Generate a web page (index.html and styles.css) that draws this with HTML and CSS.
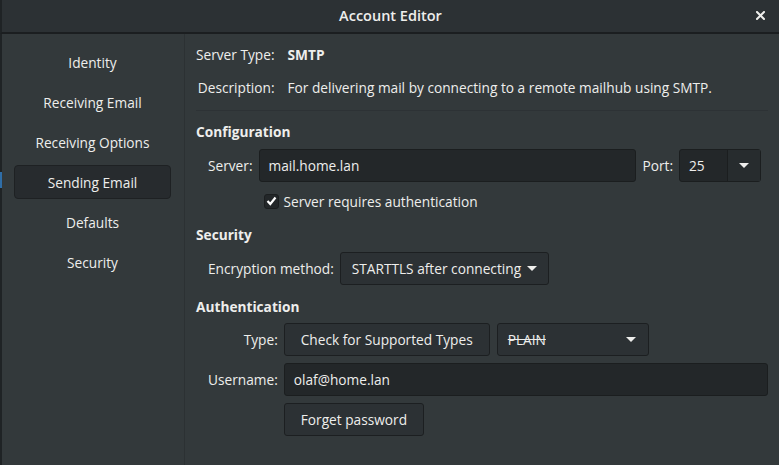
FILE: index.html
```html
<!DOCTYPE html>
<html lang="en">
<head>
    <meta charset="UTF-8">
    <meta name="viewport" content="width=device-width, initial-scale=1.0">
    <title>Account Editor</title>
    <link rel="stylesheet" href="styles.css">
</head>
<body>
    <div class="window">
        <header class="titlebar">
            <span></span>
            <span class="title">Account Editor</span>
            <button class="close" title="Close">
                <svg width="9" height="9" viewBox="0 0 9 9">
                    <path d="M1 1 L8 8 M8 1 L1 8" stroke="#eeeeec" stroke-width="2" stroke-linecap="square"/>
                </svg>
            </button>
        </header>

        <div class="main">
            <nav class="sidebar">
                <a class="nav-item">Identity</a>
                <a class="nav-item">Receiving Email</a>
                <a class="nav-item">Receiving Options</a>
                <a class="nav-item active">Sending Email</a>
                <a class="nav-item">Defaults</a>
                <a class="nav-item">Security</a>
            </nav>

            <main class="content">
                <div class="info-grid">
                    <span class="label">Server Type:</span>
                    <strong>SMTP</strong>
                    <span class="label">Description:</span>
                    <span>For delivering mail by connecting to a remote mailhub using SMTP.</span>
                </div>

                <hr class="sep">

                <!-- Configuration -->
                <h2 class="heading first">Configuration</h2>
                <div class="form-grid config">
                    <label class="label">Server:</label>
                    <div class="entry">mail.home.lan</div>
                    <label class="label">Port:</label>
                    <div class="spin-combo">
                        <span class="spin-value">25</span>
                        <span class="spin-button"><i class="arrow"></i></span>
                    </div>
                    <label class="check-row">
                        <span class="checkbox">
                            <svg width="11" height="10" viewBox="0 0 11 10">
                                <path d="M1.5 5 L4.3 8 L9.5 1.5" fill="none" stroke="#ffffff" stroke-width="2.2"/>
                            </svg>
                        </span>
                        Server requires authentication
                    </label>
                </div>

                <!-- Security -->
                <h2 class="heading security">Security</h2>
                <div class="form-grid">
                    <label class="label">Encryption method:</label>
                    <button class="btn combo">STARTTLS after connecting <i class="arrow"></i></button>
                </div>

                <!-- Authentication -->
                <h2 class="heading auth-title">Authentication</h2>
                <div class="form-grid auth">
                    <label class="label">Type:</label>
                    <div class="type-row">
                        <button class="btn">Check for Supported Types</button>
                        <button class="btn combo wide"><span class="struck">PLAIN</span><i class="arrow"></i></button>
                    </div>
                    <label class="label">Username:</label>
                    <div class="entry">olaf@home.lan</div>
                    <span></span>
                    <button class="btn forget">Forget password</button>
                </div>
            </main>
        </div>
    </div>
</body>
</html>
```

FILE: styles.css
```css
* {
    box-sizing: border-box;
}

body {
    margin: 0;
    width: 779px;
    height: 465px;
    overflow: hidden;
    font-family: 'Open Sans', 'Noto Sans', sans-serif;
    font-size: 13.7px;
    color: #eeeeec;
    background: #33393b;
}

.window {
    position: relative;
    display: flex;
    flex-direction: column;
    height: 465px;
}

/* bit of the neighbouring window peeking at the left edge */
.window::before {
    content: '';
    position: absolute;
    left: 0;
    top: 172px;
    width: 2px;
    height: 16px;
    background: #2f6ea8;
}

/* Title bar */
.titlebar {
    display: grid;
    grid-template-columns: 1fr auto 1fr;
    align-items: center;
    height: 34px;
    padding: 0 12px 2px;
    background: #2c3134;
    border-bottom: 2px solid #1b1e20;
    border-left: 2px solid #1f2325;
}

.title {
    font-size: 14.5px;
    font-weight: 600;
    color: #eeeeec;
}

.close {
    justify-self: end;
    display: flex;
    align-items: center;
    justify-content: center;
    width: 14px;
    height: 14px;
    padding: 0;
    background: none;
    border: none;
}

.main {
    display: flex;
    flex: 1;
    border-left: 2px solid #1f2325;
}

/* Sidebar */
.sidebar {
    display: flex;
    flex-direction: column;
    gap: 6px;
    width: 183px;
    padding: 11px 13px 0 12px;
    border-right: 1px solid #2c3133;
}

.nav-item {
    display: flex;
    align-items: center;
    justify-content: center;
    height: 34px;
    border: 1px solid transparent;
    border-radius: 4px;
    cursor: pointer;
}

.nav-item.active {
    background: #272b2e;
    border-color: #1e2123;
}

/* Content */
.content {
    flex: 1;
    padding: 11px 11px 0 11px;
}

.info-grid {
    display: grid;
    grid-template-columns: auto 1fr;
    column-gap: 13px;
    row-gap: 13px;
    line-height: 20px;
}

.info-grid .label {
    text-align: right;
}

.info-grid strong {
    font-weight: 700;
}

.sep {
    margin: 12px 0 0;
    border: none;
    border-top: 1px solid #2d3235;
}

.heading {
    margin: 13px 0 7px;
    font-size: 13.7px;
    font-weight: 700;
    line-height: 20px;
}

.heading.first {
    margin-top: 11px;
}

.heading.security {
    margin-top: 14px;
}

.heading.auth-title {
    margin: 12px 0 6px;
}

.form-grid {
    display: grid;
    grid-template-columns: auto auto;
    justify-content: start;
    align-items: center;
    column-gap: 6px;
    row-gap: 7px;
    padding-left: 12px;
}

.form-grid .label {
    text-align: right;
}

.form-grid.config {
    grid-template-columns: auto 1fr auto auto;
    justify-content: stretch;
    padding-right: 7px;
    row-gap: 9px;
}

.form-grid.auth {
    grid-template-columns: auto 1fr;
    justify-content: stretch;
}

.entry {
    display: flex;
    align-items: center;
    height: 33px;
    padding: 0 9px;
    background: #232729;
    border: 1px solid #1b1e1f;
    border-radius: 3px;
}

.spin-combo {
    display: flex;
    width: 82px;
    height: 33px;
    background: #232729;
    border: 1px solid #1b1e1f;
    border-radius: 3px;
}

.spin-value {
    display: flex;
    align-items: center;
    flex: 1;
    padding-left: 9px;
}

.spin-button {
    display: flex;
    align-items: center;
    justify-content: center;
    width: 33px;
    border-left: 1px solid #1b1e1f;
    background: #272c2e;
}

.arrow {
    display: inline-block;
    width: 0;
    height: 0;
    border-left: 5px solid transparent;
    border-right: 5px solid transparent;
    border-top: 5px solid #eeeeec;
}

.check-row {
    grid-column: 2 / 5;
    display: flex;
    align-items: center;
    gap: 5px;
    height: 20px;
    padding-left: 5px;
}

.checkbox {
    display: flex;
    align-items: center;
    justify-content: center;
    width: 15px;
    height: 15px;
    background: #232729;
    border: 1px solid #1b1e1f;
    border-radius: 3px;
}

/* Buttons */
.btn {
    display: inline-flex;
    align-items: center;
    height: 33px;
    padding: 0 16px;
    font: inherit;
    color: #eeeeec;
    background: #2c3134;
    border: 1px solid #1c1f21;
    border-radius: 3px;
    cursor: pointer;
}

.btn.combo {
    gap: 6px;
    padding: 0 11px;
    justify-self: start;
}

.btn.combo.wide {
    width: 152px;
    justify-content: space-between;
    padding: 0 12px 0 10px;
}

.struck {
    text-decoration: line-through;
}

.type-row {
    display: flex;
    gap: 7px;
}

.forget {
    justify-self: start;
}
```
